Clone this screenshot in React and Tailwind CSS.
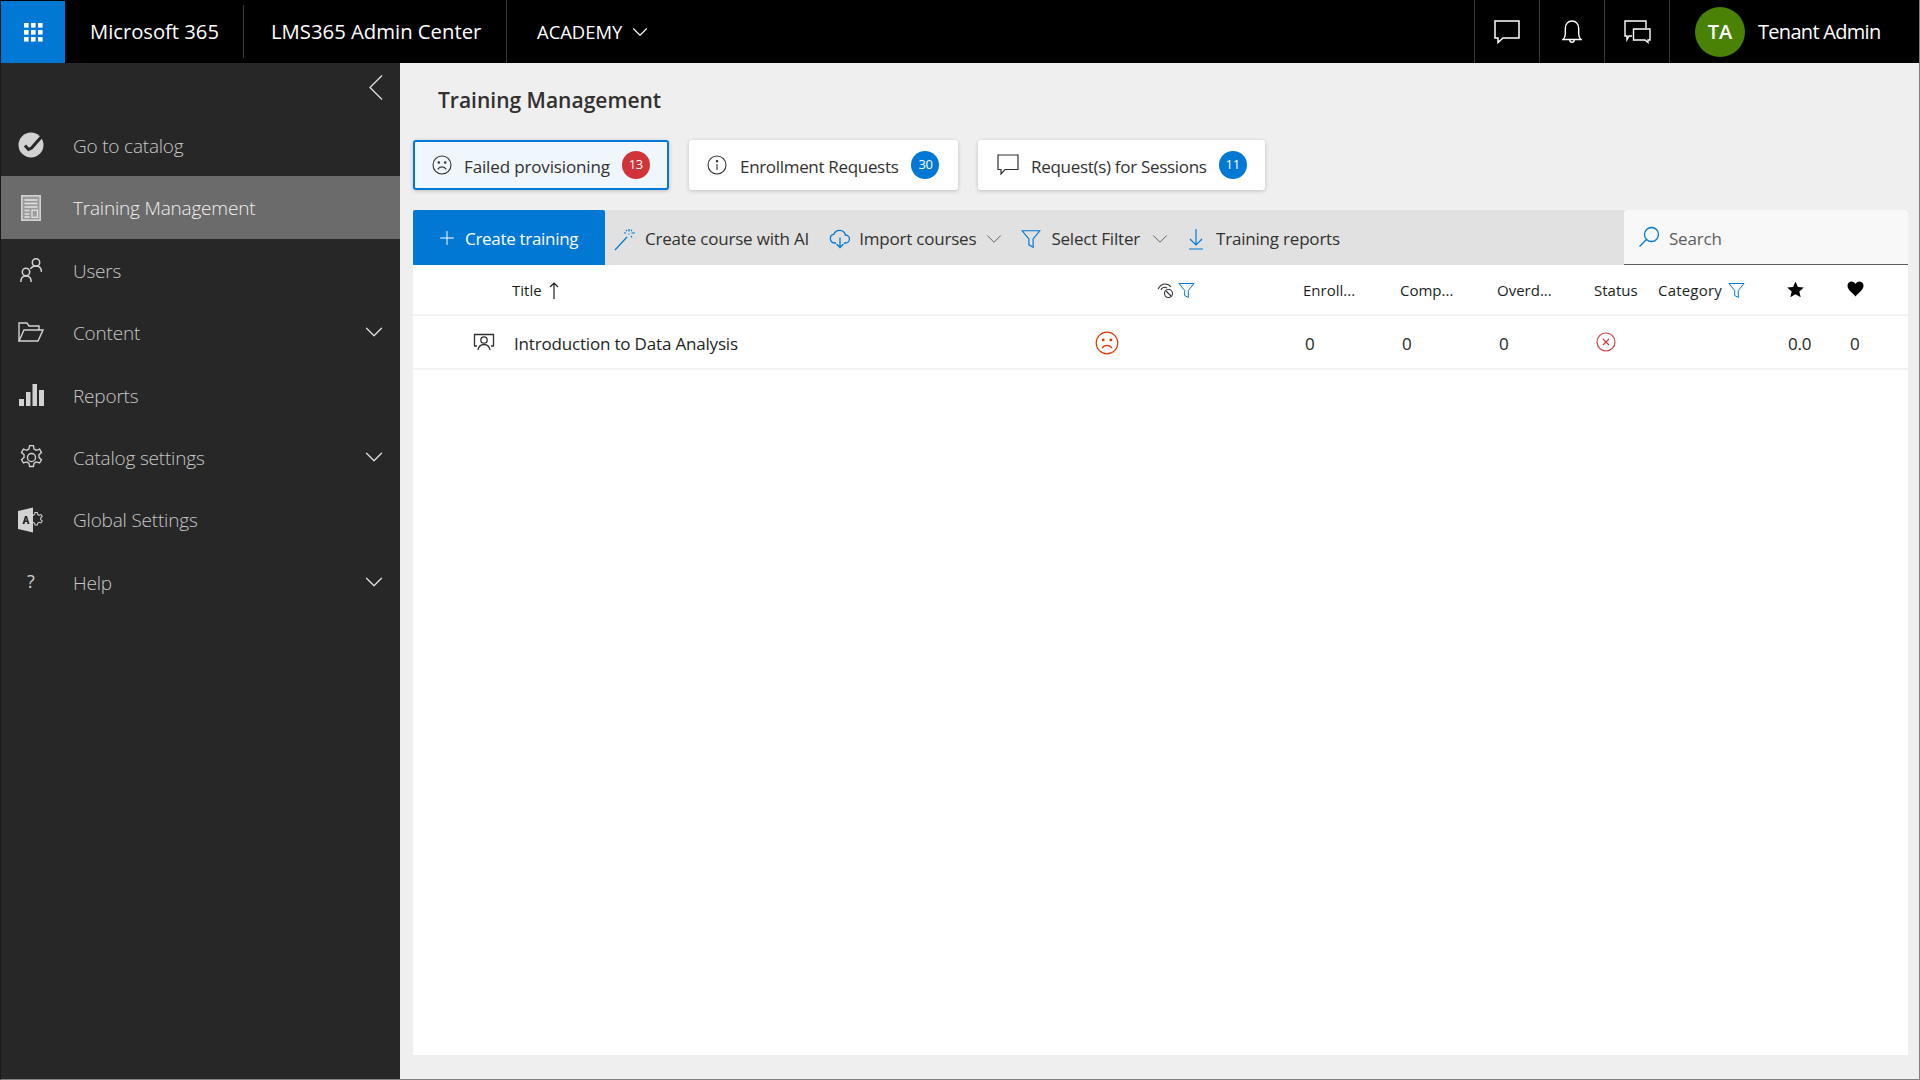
import { ChevronDown, Plus } from 'lucide-react'

function Waffle() {
  return (
    <svg width="20" height="20" viewBox="0 0 20 20" fill="#fff">
      {[1, 8, 15].map(y => [1, 8, 15].map(x => <rect key={x + '-' + y} x={x} y={y} width="4.6" height="4.6" />))}
    </svg>
  )
}

function Sad({ size = 20, color = '#323130', width = 1.1 }) {
  return (
    <svg width={size} height={size} viewBox="0 0 20 20" fill="none" stroke={color} strokeWidth={width}>
      <circle cx="10" cy="10" r="9" />
      <path d="M5.800 14.400c1-1.700 2.500-2.500 4.200-2.500s3.200.8 4.200 2.500" />
      <circle cx="6.800" cy="7.400" r=".7" fill={color} />
      <circle cx="13.200" cy="7.400" r=".7" fill={color} />
    </svg>
  )
}

function Filter({ size = 17 }) {
  return (
    <svg width={size} height={size} viewBox="0 0 17 17" fill="none" stroke="#0078d4" strokeWidth="1">
      <path d="M1 1.500h15l-5.700 7v7l-3.600-2v-5z" />
    </svg>
  )
}

function Bubble() {
  return (
    <svg width="26" height="24" viewBox="0 0 26 24" fill="none" stroke="#fff" strokeWidth="1.500">
      <path d="M1 1h24v17H9l-5 4.500V18H1z" />
    </svg>
  )
}

function Bell() {
  return (
    <svg width="20" height="24" viewBox="0 0 20 24" fill="none" stroke="#fff" strokeWidth="1.400">
      <path d="M1 19.500c1.600-1.400 2.300-3 2.300-5.500V8.400C3.300 4.200 6 1 10 1s6.700 3.200 6.700 7.400V14c0 2.500.7 4.100 2.300 5.500z" />
      <path d="M7.800 20c0 1.300 1 2.200 2.200 2.200s2.200-.9 2.200-2.200" />
    </svg>
  )
}

function Chats() {
  return (
    <svg width="27" height="24" viewBox="0 0 27 24" fill="none" stroke="#fff" strokeWidth="1.400">
      <path d="M8 16H5l-2 3.500V16H1V1h21v7" />
      <path d="M9.500 9H26v11h-2v2.500L21 20H9.500z" />
    </svg>
  )
}

function CheckBadge() {
  return (
    <svg width="26" height="26" viewBox="0 0 26 26">
      <circle cx="13" cy="13" r="12.500" fill="#d2d2d2" />
      <path d="M7 13.500l3.500 4 3-1.500L25 3" fill="none" stroke="#272727" strokeWidth="3" />
    </svg>
  )
}

function Ledger() {
  return (
    <svg width="20" height="26" viewBox="0 0 20 26" fill="none">
      <rect x=".8" y=".8" width="18.400" height="24.400" fill="#9c9c9c" stroke="#d2d2d2" strokeWidth="1.600" />
      <path d="M3.500 5h13M3.500 8.500h13M3.500 12h13M3.500 15.500h5M3.500 19h5M3.500 22h5" stroke="#e2e2e2" strokeWidth="1.300" />
      <rect x="11" y="15.200" width="5.500" height="7" stroke="#e2e2e2" strokeWidth="1.300" />
    </svg>
  )
}

function UsersIcon() {
  return (
    <svg width="22" height="24" viewBox="0 0 22 24" fill="none" stroke="#d2d2d2" strokeWidth="1.500">
      <circle cx="16" cy="4.500" r="3.700" />
      <circle cx="6" cy="14" r="3.700" />
      <path d="M.8 24c0-3.500 2-6 5.200-6s5.200 2.500 5.200 6" />
      <path d="M10.500 11c.8-1.800 3-3 5.500-3 3 0 5.300 2.300 5.500 6" />
    </svg>
  )
}

function Folder() {
  return (
    <svg width="26" height="20" viewBox="0 0 26 20" fill="none" stroke="#d2d2d2" strokeWidth="1.400">
      <path d="M1 19V1h8l2 3h10v4" />
      <path d="M1 19l5-11h19l-5 11z" />
    </svg>
  )
}

function Bars() {
  return (
    <svg width="25" height="22" viewBox="0 0 25 22" fill="#d2d2d2">
      <rect x="0" y="15" width="5" height="7" />
      <rect x="7" y="8" width="4.500" height="14" />
      <rect x="13.500" y="0" width="4.500" height="22" />
      <rect x="20" y="6" width="5" height="16" />
    </svg>
  )
}

const gearPath = 'M10.300 1.500h3.400l.6 3a8 8 0 0 1 2 1.100l2.900-1 1.700 3-2.300 2a8 8 0 0 1 0 2.300l2.300 2-1.700 3-2.900-1a8 8 0 0 1-2 1.200l-.6 2.900h-3.400l-.6-2.900a8 8 0 0 1-2-1.200l-2.900 1-1.700-3 2.300-2a8 8 0 0 1 0-2.300l-2.300-2 1.700-3 2.900 1a8 8 0 0 1 2-1.100z'

function Gear() {
  return (
    <svg width="27" height="27" viewBox="0 0 24 24" fill="none" stroke="#d2d2d2" strokeWidth="1.200">
      <path d={gearPath} />
      <circle cx="12" cy="12" r="3.600" />
    </svg>
  )
}

function AdminGear() {
  return (
    <svg width="26" height="26" viewBox="0 0 26 26">
      <g transform="translate(10 4.500) scale(.68)"><path fill="none" stroke="#d2d2d2" strokeWidth="1.500" d={gearPath} /></g>
      <path fill="#d2d2d2" d="M0 4l15-3.500v25L0 22z" />
      <path fill="#272727" d="M4.500 17l2.500-8h2l2.500 8h-2l-.5-2H7l-.5 2zm3-3.500h1.200L8 10.800z" />
    </svg>
  )
}

function Wand() {
  return (
    <svg width="22" height="24" viewBox="0 0 22 24" fill="none" stroke="#0078d4" strokeWidth="1.200">
      <path d="M1 23L13 10" />
      <path d="M15 2v2.500M15 6.500v1M10 6h2M17.500 6H21M12 3l1 1M18 3l-1 1M17 9l1 1.500" />
    </svg>
  )
}

function Cloud() {
  return (
    <svg width="22" height="20" viewBox="0 0 22 20" fill="none" stroke="#0078d4" strokeWidth="1.300">
      <path d="M7 14H5.500a4.500 4.500 0 0 1-.5-8.900 6 6 0 0 1 11.400.9A4 4 0 0 1 16.500 14H15" />
      <path d="M11 8.500V18M7.500 15l3.500 3.500 3.500-3.500" />
    </svg>
  )
}

function Download() {
  return (
    <svg width="16" height="22" viewBox="0 0 16 22" fill="none" stroke="#0078d4" strokeWidth="1.200">
      <path d="M8 1v16M2 11l6 6 6-6M1 21h14" />
    </svg>
  )
}

function Info() {
  return (
    <svg width="20" height="20" viewBox="0 0 20 20" fill="none" stroke="#323130" strokeWidth="1.100">
      <circle cx="10" cy="10" r="9" />
      <path d="M10 9v6" />
      <circle cx="10" cy="6.200" r=".7" fill="#323130" />
    </svg>
  )
}

function SmallBubble() {
  return (
    <svg width="22" height="22" viewBox="0 0 22 22" fill="none" stroke="#323130" strokeWidth="1.200">
      <path d="M1 1h20v14.500H8L4 20v-4.500H1z" />
    </svg>
  )
}

function Classroom() {
  return (
    <svg width="22" height="18" viewBox="0 0 22 18" fill="none" stroke="#323130" strokeWidth="1.300">
      <path d="M1.500 13V1.500h19V13M1 13h3M18 13h3" />
      <circle cx="11" cy="7" r="3.200" />
      <path d="M5 17c.6-3.500 3-5.500 6-5.500s5.400 2 6 5.500" />
    </svg>
  )
}

function Visibility() {
  return (
    <svg width="17" height="17" viewBox="0 0 17 17" fill="none" stroke="#323130" strokeWidth="1.100">
      <path d="M1 7C3 3.500 5.500 2 8 2s4.500 1 6 3" />
      <path d="M4 8a4 4 0 0 1 6-2" />
      <circle cx="11.500" cy="11.500" r="4" />
      <path d="M9 9l5 5" />
    </svg>
  )
}

function StatusError() {
  return (
    <svg width="20" height="20" viewBox="0 0 20 20" fill="none" stroke="#d13438" strokeWidth="1.100">
      <circle cx="10" cy="10" r="9" />
      <path d="M7 7l6 6M13 7l-6 6" />
    </svg>
  )
}

function SearchGlass() {
  return (
    <svg width="22" height="22" viewBox="0 0 22 22" fill="none" stroke="#0078d4" strokeWidth="1.300">
      <circle cx="13.500" cy="8.500" r="7" />
      <path d="M8.500 13.500L1.500 20.500" />
    </svg>
  )
}

function ArrowUp() {
  return (
    <svg width="10" height="17" viewBox="0 0 10 17" fill="none" stroke="#201f1e" strokeWidth="1.200">
      <path d="M5 1v16M1 5l4-4 4 4" />
    </svg>
  )
}

function Star() {
  return (
    <svg width="17" height="17" viewBox="0 0 17 17" fill="#000">
      <path d="M8.500 .5l2.400 5.500 5.900.5-4.500 3.900 1.400 5.900-5.200-3.100-5.200 3.100 1.400-5.900L.2 6.500l5.900-.5z" />
    </svg>
  )
}

function Heart() {
  return (
    <svg width="17" height="16" viewBox="0 0 17 16" fill="#000">
      <path d="M8.500 15.500C6 12.500 .5 9 .5 4.800 .5 2.300 2.300.5 4.500.5c1.800 0 3.200 1 4 2.500.8-1.500 2.200-2.500 4-2.500 2.200 0 4 1.800 4 4.300 0 4.200-5.500 7.700-8 10.700z" />
    </svg>
  )
}

const nav = [
  { label: 'Go to catalog', icon: <CheckBadge /> },
  { label: 'Training Management', icon: <Ledger />, active: true },
  { label: 'Users', icon: <UsersIcon /> },
  { label: 'Content', icon: <Folder />, more: true },
  { label: 'Reports', icon: <Bars /> },
  { label: 'Catalog settings', icon: <Gear />, more: true },
  { label: 'Global Settings', icon: <AdminGear /> },
  { label: 'Help', icon: <span className="text-[18px] text-[#d2d2d2]">?</span>, more: true },
]

const tabs = [
  { label: 'Failed provisioning', count: 13, icon: <Sad />, active: true, w: 'w-[256px]', pad: 'pl-[17px]', gap: 'gap-[12px]', track: 'tracking-[-0.14px]' },
  { label: 'Enrollment Requests', count: 30, icon: <Info />, w: 'w-[269px]', pad: 'pl-[16px]', gap: 'gap-[13px]', track: 'tracking-[-0.32px]' },
  { label: 'Request(s) for Sessions', count: 11, icon: <SmallBubble />, w: 'w-[287px]', pad: 'pl-[17px]', gap: 'gap-[12px]', track: 'tracking-[-0.3px]' },
]

const gridCols = 'grid grid-cols-[99px_578px_60px_153px_97px_97px_97px_64px_122px_60px_1fr]'

export default function App() {
  return (
    <div className="flex h-[1080px] w-[1920px] flex-col overflow-hidden border-b border-l border-r border-b-[#808080] border-l-[#1a1a1a] border-r-[#808080] bg-[#efefef] font-['Open_Sans',sans-serif]">
      <header className="flex h-[63px] shrink-0 items-center bg-black text-white">
        <div className="mt-px flex h-[62px] w-[64px] items-center justify-center bg-[#0078d4]"><Waffle /></div>
        <div className="flex h-full w-[178px] items-center pl-[25px] text-[20.200px]">Microsoft 365</div>
        <div className="flex h-[53px] w-[263px] items-center border-l border-[#3b3b3b] pl-[27px] text-[20.300px]">LMS365 Admin Center</div>
        <div className="flex h-full items-center gap-[10px] border-l border-[#3b3b3b] pl-[30px] text-[18.400px]">
          ACADEMY <ChevronDown size={26} strokeWidth={1} className="-ml-[5px]" />
        </div>
        <div className="ml-auto flex h-full items-center">
          <div className="flex h-full w-[65px] items-center justify-center border-l border-[#3b3b3b]"><Bubble /></div>
          <div className="flex h-full w-[65px] items-center justify-center border-l border-[#3b3b3b]"><Bell /></div>
          <div className="flex h-full w-[65px] items-center justify-center border-l border-[#3b3b3b]"><Chats /></div>
          <div className="flex h-full w-[250px] items-center gap-[13px] border-l border-[#3b3b3b] pl-[25px]">
            <div className="flex h-[50px] w-[50px] items-center justify-center rounded-full bg-[#498205] text-[20px] font-semibold">TA</div>
            <span className="text-[20px] tracking-[-0.7px]">Tenant Admin</span>
          </div>
        </div>
      </header>

      <div className="flex min-h-0 flex-1">
        <aside className="w-[399px] shrink-0 bg-[#272727]">
          <div className="flex h-[51px] items-start justify-end pr-[17px] pt-[12px]">
            <svg width="14" height="25" viewBox="0 0 14 25" fill="none" stroke="#e0e0e0" strokeWidth="1.300"><path d="M13 .5L1 12.500 13 24.500" /></svg>
          </div>
          {nav.map(item => (
            <div key={item.label} className={item.active ? 'flex h-[62.4px] items-center bg-[#6b6b6b] text-[#f0f0f0]' : 'flex h-[62.4px] items-center text-[#c8c8c8]'}>
              <div className="flex w-[60px] shrink-0 items-center justify-center">{item.icon}</div>
              <span className="pl-[12px] pt-[2px] text-[19px] font-light tracking-[-0.2px]">{item.label}</span>
              {item.more && <ChevronDown size={30} strokeWidth={1} className="ml-auto mr-[11px] text-[#e0e0e0]" />}
            </div>
          ))}
        </aside>

        <main className="min-w-0 flex-1 pl-[13px] pr-[11px]">
          <h1 className="pl-[25px] pt-[21px] text-[21px] font-semibold leading-[32px] text-[#323130]">Training Management</h1>
          <div className="mt-[24px] flex gap-[20px]">
            {tabs.map(tab => (
              <div
                key={tab.label}
                className={(tab.active ? 'border-2 border-[#0078d4] bg-[#eff6fc] ' : 'border-2 border-white bg-white ') + 'flex h-[50px] items-center rounded-[3px] shadow-[0_1px_4px_rgba(0,0,0,0.2)] ' + tab.w + ' ' + tab.pad + ' ' + tab.gap}
              >
                {tab.icon}
                <span className={'pt-[3px] text-[17px] text-[#323130] ' + tab.track}>{tab.label}</span>
                <span className={(tab.active ? 'bg-[#d13438] ' : 'bg-[#0078d4] ') + 'flex h-[28px] w-[28px] items-center justify-center rounded-full text-[13px] tracking-[-0.4px] text-white'}>{tab.count}</span>
              </div>
            ))}
          </div>

          <div className="mt-[20px] flex h-[55px] items-center bg-[#e1e1e1] text-[17px] tracking-[-0.2px] text-[#323130]">
            <div className="flex h-full w-[192px] items-center gap-[7px] rounded-t-[2px] bg-[#0078d4] pl-[23px] pt-[2px] tracking-[-0.3px] text-white">
              <Plus size={22} strokeWidth={1.100} className="-mt-[2px]" /> Create training
            </div>
            <div className="ml-[9px] flex items-center gap-[9px] pt-[2px]"><Wand /> Create course with AI</div>
            <div className="ml-[20px] flex items-center gap-[8px] pt-[2px]"><Cloud /> Import courses <ChevronDown size={26} strokeWidth={.9} className="-ml-[3px] text-[#605e5c]" /></div>
            <div className="ml-[14px] flex items-center gap-[10px] pt-[2px]"><Filter size={20} /> Select Filter <ChevronDown size={26} strokeWidth={.9} className="-ml-[3px] text-[#605e5c]" /></div>
            <div className="ml-[15px] flex items-center gap-[12px] pt-[2px]"><Download /> Training reports</div>
            <div className="ml-auto flex h-full w-[284px] items-center gap-[9px] rounded-t-[3px] border-b border-[#605e5c] bg-[#f8f8f8] pl-[14px] text-[#605e5c]">
              <SearchGlass /> <span className="pt-[3px]">Search</span>
            </div>
          </div>

          <div className="h-[790px] bg-white text-[15px] text-[#201f1e]">
            <div className={gridCols + ' h-[51px] items-center border-b-2 border-[#f3f2f1] pt-[1px]'}>
              <div />
              <div className="flex items-center gap-[7px]">Title <ArrowUp /></div>
              <div />
              <div className="flex items-center gap-[4px] pl-[7px]"><Visibility /><Filter /></div>
              <div>Enroll...</div>
              <div>Comp...</div>
              <div>Overd...</div>
              <div>Status</div>
              <div className="flex items-center gap-[6px] tracking-[0.2px]">Category <Filter /></div>
              <div className="-mt-[2px] pl-[7px]"><Star /></div>
              <div className="-mt-[2px] pl-[7px]"><Heart /></div>
            </div>
            <div className={gridCols + ' h-[54px] items-center border-b-2 border-[#f3f2f1] text-[17px] tracking-[-0.18px]'}>
              <div className="flex justify-end pr-[17px]"><Classroom /></div>
              <div className="pl-[2px] pt-[3px]">Introduction to Data Analysis</div>
              <div className="pl-[5px] pt-[1px]"><Sad size={24} color="#d83b01" width={1} /></div>
              <div />
              <div className="pl-[2px] pt-[3px]">0</div>
              <div className="pl-[2px] pt-[3px]">0</div>
              <div className="pl-[2px] pt-[3px]">0</div>
              <div className="pl-[2px]"><StatusError /></div>
              <div />
              <div className="pl-[8px] pt-[3px]">0.0</div>
              <div className="pl-[10px] pt-[3px]">0</div>
            </div>
          </div>
        </main>
      </div>
    </div>
  )
}
